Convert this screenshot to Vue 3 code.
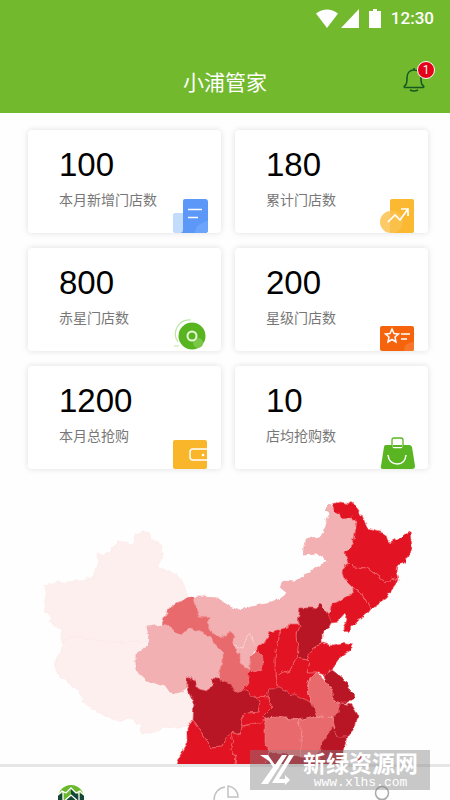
<template>
  <div class="page">
    <header class="header">
      <div class="status-bar">
        <svg class="status-icons" viewBox="0 0 66 20" aria-hidden="true">
          <path d="M0 4.500Q11-3.500 22 4.500L11 19Z" />
          <path d="M25 19L43 0V19Z" />
          <path d="M57 0H61V2H65V19H53V2H57Z" />
        </svg>
        <span class="clock">12:30</span>
      </div>
      <div class="title-bar">
        <h1>小浦管家</h1>
        <button class="bell" type="button" aria-label="消息">
          <svg viewBox="0 0 22 26" aria-hidden="true">
            <path d="M11 1V3M2 20.500C1 20.500 1 19 2 18.500C4 17.500 4 15 4 11C4 6 7 3 11 3S18 6 18 11C18 15 18 17.500 20 18.500C21 19 21 20.500 20 20.500ZM7 23Q11 25 15 23" />
          </svg>
          <span class="badge">1</span>
        </button>
      </div>
    </header>

    <main>
      <section class="cards">
        <div v-for="card in tarjetas" :key="card.etiqueta" class="card">
          <div class="card-text">
            <strong>{{ card.valor }}</strong>
            <span>{{ card.etiqueta }}</span>
          </div>
          <svg class="card-icon" viewBox="0 0 36 36" aria-hidden="true">
            <g v-if="card.icono === 'doc'">
              <rect x="0" y="16" width="15" height="20" rx="2" fill="#c3dcfe" />
              <path d="M12 2H32Q35 2 35 5V33Q35 36 32 36H8Q10 35 10 33V4Q10 2 12 2Z" fill="#5b98f8" />
              <path d="M22 36Q22 27 35 24V33Q35 36 32 36Z" fill="#6ba4fa" />
              <path d="M15 12.500H29M15 20.500H25" stroke="#fff" stroke-width="1.500" />
            </g>
            <g v-else-if="card.icono === 'trend'">
              <rect x="10" y="2" width="24" height="34" rx="2" fill="#fab930" />
              <circle cx="11" cy="25" r="11" fill="#fccb68" />
              <path d="M10 14A11 11 0 0 1 18 34L10 36Z" fill="#fbc04a" />
              <path d="M8 25L15 18L20 23L28 12M21 12H28V19" fill="none" stroke="#fff" stroke-width="1.700" />
            </g>
            <g v-else-if="card.icono === 'disc'">
              <path d="M5 27A14 14 0 0 1 18 5M1 31H6" fill="none" stroke="#bce5a6" stroke-width="1.200" />
              <circle cx="19" cy="21" r="13.500" fill="#59b51f" />
              <circle cx="25" cy="28" r="5" fill="#7ac748" />
              <circle cx="19" cy="21" r="4.500" fill="none" stroke="#e6f8d9" stroke-width="2" />
            </g>
            <g v-else-if="card.icono === 'star'">
              <rect x="0" y="11" width="34" height="25" rx="2" fill="#f5640d" />
              <path d="M24 36Q23 28 34 27V34Q34 36 32 36Z" fill="#f8762a" />
              <path d="M12 14L14 18.500L18.500 19L15 22L16 27L12 24.500L8 27L9 22L5.500 19L10 18.500ZM21 19H30M21 24H27" fill="none" stroke="#fff" stroke-width="1.500" />
            </g>
            <g v-else-if="card.icono === 'wallet'">
              <rect x="0" y="7" width="34" height="29" rx="2" fill="#fab62b" />
              <path d="M34 16H20Q17 16 17 19V24Q17 27 20 27H34" fill="none" stroke="#fff" stroke-width="1.500" />
              <circle cx="30" cy="22" r="1.300" fill="#fff" />
            </g>
            <g v-else>
              <path d="M6 12H29Q31 12 32 14L35 33Q35 36 32 36H3Q0 36 1 33L4 14Q4 12 6 12Z" fill="#59b522" />
              <path d="M8 22Q9 31 17.500 31Q25 31 26 22" fill="none" stroke="#fff" stroke-width="1.500" />
              <rect x="12" y="5" width="11" height="11" rx="2" fill="#fff" stroke="#59b522" stroke-width="1.300" />
              <path d="M13 13H22" stroke="#59b522" stroke-width="2" />
            </g>
          </svg>
        </div>
      </section>

      <svg class="map" viewBox="0 469 450 295" role="img" aria-label="全国门店分布">
        <defs>
          <!-- Rompe las líneas rectas para que las fronteras parezcan naturales -->
          <filter id="frontera" x="0" y="0" width="1" height="1" color-interpolation-filters="sRGB">
            <feTurbulence type="fractalNoise" baseFrequency="0.14" numOctaves="2" seed="4" />
            <feDisplacementMap in="SourceGraphic" scale="6" xChannelSelector="R" yChannelSelector="G" />
          </filter>
        </defs>
        <g filter="url(#frontera)">
          <rect x="0" y="469" width="450" height="310" fill="none" />
          <polygon
            v-for="zona in zonas"
            :key="zona.nombre"
            :class="['zona', zona.nivel]"
            :points="zona.puntos"
          />
          <path class="ningxia" d="M232 645L243 648L246 637L250 633L252 640L255 645" />
        </g>
      </svg>
    </main>

    <nav class="tabs">
      <button type="button" aria-label="首页">
        <svg viewBox="0 0 28 28" aria-hidden="true">
          <circle cx="14" cy="14" r="13" fill="#69b82e" />
          <path d="M1 11L6 9V28L1 20ZM27 11L22 9V28L27 20Z" fill="#174537" />
          <path d="M14 5L23 12V28H5V12Z" fill="#174537" />
          <path d="M14 5V12L6 18V11Z" fill="#69b82e" />
          <path d="M14 20L22 27V28H6V27Z" fill="#4e9b31" />
          <path d="M0 12L5 7L9 9L14 4L19 9L23 7L28 12M5 19L14 11L23 19M5 26L14 18L23 26M6 8V28M22 8V28" fill="none" stroke="#fff" stroke-width="1.300" />
        </svg>
      </button>
      <button type="button" aria-label="统计">
        <svg viewBox="0 0 28 28" aria-hidden="true">
          <path d="M12 3A12 12 0 1 0 25 17M15 2A11 11 0 0 1 25 13H15Z" fill="none" stroke="#c2c2c2" stroke-width="1.500" />
        </svg>
      </button>
      <button type="button" aria-label="我的">
        <svg viewBox="0 0 28 28" aria-hidden="true">
          <circle cx="14" cy="9" r="6.500" fill="none" stroke="#aaa" stroke-width="1.500" />
          <path d="M2 28Q4 16 14 16T26 28" fill="none" stroke="#aaa" stroke-width="1.500" />
        </svg>
      </button>
    </nav>

    <div class="watermark">
      <svg viewBox="0 0 36 30" aria-hidden="true">
        <path d="M0 0H8L15 10L22 0H27L8 29H1L13 12L9 6L6 4ZM29 0H34L19 24H25V20L30 25L25 30V28H12Z" fill="#fff" />
      </svg>
      <div class="watermark-text">
        <b>新绿资源网</b>
        <span>www.xlhs.com</span>
      </div>
    </div>
  </div>
</template>

<script setup>
const tarjetas = [
  { valor: '100', etiqueta: '本月新增门店数', icono: 'doc' },
  { valor: '180', etiqueta: '累计门店数', icono: 'trend' },
  { valor: '800', etiqueta: '赤星门店数', icono: 'disc' },
  { valor: '200', etiqueta: '星级门店数', icono: 'star' },
  { valor: '1200', etiqueta: '本月总抢购', icono: 'wallet' },
  { valor: '10', etiqueta: '店均抢购数', icono: 'bag' }
];

// Cada zona del mapa con su nivel de color según el número de tiendas
const zonas = [
  { nombre: 'xinjiang', nivel: 'n1', puntos: '45,585 53,583 70,582 92,578 98,565 97,553 110,554 119,541 133,544 135,535 143,530 149,532 151,538 160,545 163,558 158,568 177,575 187,590 187,597 173,605 165,615 162,625 147,627 149,635 148,643 132,641 115,643 100,640 87,638 73,637 62,643 61,630 50,622 49,615 44,607 47,597' },
  { nombre: 'xizang', nivel: 'n1', puntos: '62,643 73,637 87,638 100,640 115,643 132,641 148,643 147,648 136,652 136,670 147,680 165,685 170,692 177,693 187,688 190,690 194,703 193,720 187,726 178,728 163,727 152,733 142,733 140,725 130,718 118,722 98,712 85,702 80,692 67,682 57,672 55,660 61,653' },
  { nombre: 'qinghai', nivel: 'n2', puntos: '147,627 162,625 168,625 182,635 190,628 203,632 213,642 223,652 223,663 218,673 220,680 212,678 213,687 207,691 197,688 192,678 187,678 187,688 177,693 170,692 165,685 147,680 136,670 136,652 147,648 148,643 149,635' },
  { nombre: 'neimenggu', nivel: 'n2', puntos: '194,597 205,597 217,598 230,606 240,610 260,605 275,602 287,593 281,588 283,581 295,582 310,572 320,565 328,562 323,557 317,553 303,554 305,543 309,537 320,539 325,527 330,513 325,509 330,504 335,512 342,518 353,517 357,522 355,533 353,545 345,553 348,562 342,570 345,580 353,588 353,593 342,600 332,605 328,613 320,603 315,608 300,608 298,623 292,623 282,632 270,633 263,645 257,648 250,657 250,670 240,663 240,653 232,645 235,637 232,632 222,637 213,633 207,623 210,617 200,616 197,612' },
  { nombre: 'gansu', nivel: 'n3', puntos: '162,624 165,615 173,605 187,598 190,596 194,597 197,612 200,616 210,617 207,623 213,633 222,637 232,632 235,637 232,645 240,653 240,663 250,670 248,683 243,690 235,692 230,683 223,682 220,680 218,673 223,663 223,652 213,642 203,632 190,628 182,635 168,625' },
  { nombre: 'qingyang', nivel: 'n3', puntos: '250,657 257,651 263,657 263,668 255,672 250,670' },
  { nombre: 'heilongjiang', nivel: 'n4', puntos: '332,504 340,501 353,503 362,515 367,528 383,532 390,543 400,538 409,532 411,547 406,562 398,565 397,572 399,580 390,578 386,583 380,578 367,568 353,567 348,562 345,553 353,545 355,533 357,522 353,517 342,518 335,512' },
  { nombre: 'jilin', nivel: 'n4', puntos: '348,562 353,567 367,568 380,578 386,583 390,578 399,580 393,588 387,598 377,605 370,609 365,600 360,592 353,588 345,580 342,570' },
  { nombre: 'liaoning', nivel: 'n4', puntos: '353,588 360,592 365,600 370,609 367,613 357,622 347,632 344,629 348,618 345,613 337,622 332,623 328,615 332,605 342,600 353,593' },
  { nombre: 'hebei', nivel: 'n5', puntos: '300,608 315,608 320,603 328,613 332,623 330,627 322,633 322,642 313,648 307,660 297,658 298,647 297,635 300,625 298,623' },
  { nombre: 'shanxi', nivel: 'n4', puntos: '298,623 300,625 297,635 298,647 297,658 290,670 275,675 275,657 278,637 282,630 292,623' },
  { nombre: 'shaanxi', nivel: 'n4', puntos: '282,630 278,637 275,657 275,675 278,688 270,688 268,698 257,697 243,690 248,683 250,670 255,672 263,668 263,657 257,651 257,648 263,645 270,633' },
  { nombre: 'shandong', nivel: 'n4', puntos: '313,648 323,642 332,645 342,643 353,645 351,650 343,655 333,668 325,675 317,672 307,672 310,663 307,660' },
  { nombre: 'henan', nivel: 'n4', puntos: '297,658 307,660 310,663 307,672 317,672 310,678 307,688 312,702 300,698 278,688 275,675 290,670' },
  { nombre: 'jiangsu', nivel: 'n5', puntos: '325,675 332,670 343,678 350,690 355,695 348,703 340,703 333,700 333,692 327,682' },
  { nombre: 'anhui', nivel: 'n3', puntos: '317,672 327,682 333,692 333,700 340,703 338,713 332,718 317,715 312,702 307,688 310,678' },
  { nombre: 'zhejiang', nivel: 'n5', puntos: '340,703 352,705 358,715 355,727 348,737 337,737 333,727 332,718 338,713' },
  { nombre: 'hubei', nivel: 'n5', puntos: '270,688 278,688 300,698 312,702 317,715 298,720 277,717 265,720 263,717 272,708 268,698' },
  { nombre: 'sichuan', nivel: 'n5', puntos: '187,678 192,678 197,688 207,691 213,687 212,678 220,680 230,683 235,692 243,690 257,697 260,703 258,712 248,713 240,718 242,727 240,735 230,732 222,747 212,748 203,735 197,725 193,720 194,703 187,688' },
  { nombre: 'chongqing', nivel: 'n4', puntos: '257,697 268,698 272,708 263,717 265,723 253,725 242,727 240,718 248,713 258,712 260,703' },
  { nombre: 'hunan', nivel: 'n3', puntos: '265,720 277,717 298,720 302,730 301,743 302,757 285,754 270,753 265,743' },
  { nombre: 'jiangxi', nivel: 'n3', puntos: '298,720 317,715 332,718 335,728 323,740 320,753 310,758 302,757 301,743 302,730' },
  { nombre: 'fujian', nivel: 'n5', puntos: '333,727 337,737 348,737 345,747 343,755 335,770 318,770 320,753 323,740' },
  { nombre: 'guangdong', nivel: 'n5', puntos: '270,753 285,754 302,757 310,758 320,753 318,772 262,772' },
  { nombre: 'yunnan', nivel: 'n4', puntos: '187,728 193,720 197,725 203,735 212,748 222,747 230,732 233,742 230,750 236,757 234,772 176,772 178,760 187,745' },
  { nombre: 'guizhou', nivel: 'n4', puntos: '230,732 240,735 242,727 253,725 265,720 265,743 270,753 262,772 234,772 236,757 230,750 233,742' },
  { nombre: 'taiwan', nivel: 'n4', puntos: '357,757 361,755 362,758 359,763 357,762' }
];
</script>

<style>
body {
  margin: 0;
  background: #fff;
}
</style>

<style scoped>
.page {
  position: relative;
  display: flex;
  flex-direction: column;
  height: 100vh;
  overflow: hidden;
  background: #fefefe;
  font-family: "Liberation Sans", "Noto Sans CJK SC", sans-serif;
}

button {
  padding: 0;
  border: 0;
  background: none;
  cursor: pointer;
}

.header {
  box-sizing: border-box;
  padding: 8px 16px 12px;
  background: #72b92e;
  color: #fff;
}

.status-bar {
  display: flex;
  align-items: center;
  justify-content: flex-end;
  gap: 9px;
  height: 21px;
}

.status-icons {
  width: 66px;
  height: 20px;
  fill: #fff;
}

.clock {
  font: 500 17px/21px Roboto, sans-serif;
}

.title-bar {
  display: grid;
  grid-template-columns: 1fr auto 1fr;
  align-items: end;
  height: 72px;
}

.title-bar h1 {
  grid-column: 2;
  margin: 0 0 6px;
  font: 400 21px/28px "Noto Sans CJK SC", sans-serif;
}

.bell {
  position: relative;
  justify-self: end;
  width: 22px;
  height: 26px;
  margin: 0 9px 8px 0;
}

.bell svg {
  display: block;
  width: 22px;
  height: 26px;
  fill: none;
  stroke: #155a20;
  stroke-width: 1.6;
}

.badge {
  position: absolute;
  top: -6px;
  right: -10px;
  width: 16px;
  height: 16px;
  border: 1px solid #fff;
  border-radius: 50%;
  background: #e50019;
  color: #fff;
  font: 12px/16px Roboto, sans-serif;
  text-align: center;
}

.cards {
  display: grid;
  grid-template-columns: 1fr 1fr;
  gap: 15px 14px;
  padding: 17px 22px 0 28px;
}

.card {
  display: flex;
  align-items: flex-end;
  justify-content: space-between;
  box-sizing: border-box;
  height: 103px;
  padding: 0 12px 0 31px;
  border-radius: 4px;
  background: #fff;
  box-shadow: 0 0 6px rgba(0, 0, 0, 0.13);
}

.card-text {
  display: flex;
  flex-direction: column;
  align-self: flex-start;
  gap: 4px;
  padding-top: 15px;
  white-space: nowrap;
}

.card-text strong {
  color: #000;
  font-size: 33px;
  font-weight: 400;
  line-height: 40px;
}

.card-text span {
  color: #777;
  font: 400 14px/20px "Noto Sans CJK SC", sans-serif;
}

.card-icon {
  flex: none;
  width: 36px;
  height: 36px;
  margin-left: -20px;
}

.map {
  display: block;
  width: 100%;
}

.zona {
  stroke-width: 0.7;
  stroke-linejoin: round;
}

.n1 {
  fill: #fdefee;
  stroke: #fbe8e7;
}

.n2 {
  fill: #f3b0b2;
  stroke: #f2a6a9;
}

.n3 {
  fill: #e96a6d;
  stroke: #f08e90;
}

.n4 {
  fill: #e21322;
  stroke: #f2686e;
}

.n5 {
  fill: #b81525;
  stroke: #e2525c;
}

.ningxia {
  fill: none;
  stroke: #fad3d3;
}

.tabs {
  display: flex;
  flex: 1;
  align-items: flex-start;
  justify-content: space-between;
  min-height: 0;
  padding: 17px 54px 0 57px;
  border-top: 3px solid #e6e6e6;
  overflow: hidden;
}

.tabs button {
  height: 28px;
}

.tabs svg {
  display: block;
  width: 28px;
  height: 28px;
}

.watermark {
  position: absolute;
  right: 20px;
  bottom: 10px;
  display: flex;
  align-items: center;
  gap: 7px;
  box-sizing: border-box;
  width: 180px;
  height: 40px;
  padding: 0 10px;
  background: rgba(130, 130, 130, 0.43);
  color: #fff;
}

.watermark svg {
  flex: none;
  width: 36px;
  height: 30px;
}

.watermark-text {
  display: flex;
  flex-direction: column;
  align-items: center;
}

.watermark b {
  font: 700 23px/25px "Noto Sans CJK SC", sans-serif;
}

.watermark span {
  font: 13px/15px "Liberation Mono", monospace;
}
</style>
